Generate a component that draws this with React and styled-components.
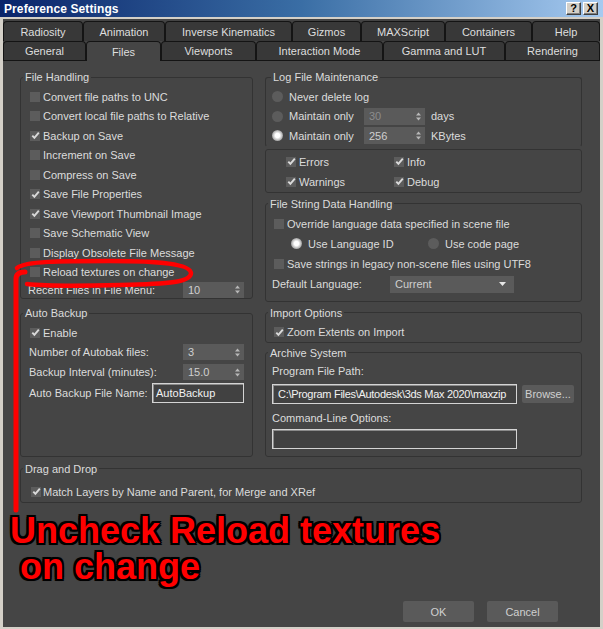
import styled, { createGlobalStyle } from "styled-components";

const GlobalStyle = createGlobalStyle`
  html, body {
    margin: 0;
    padding: 0;
    background: #d4d0c8;
  }
  * {
    box-sizing: border-box;
  }
`;

const Window = styled.div`
  position: relative;
  width: 603px;
  height: 629px;
  background: #d4d0c8;
  display: flex;
  flex-direction: column;
  overflow: hidden;
  font-family: "Liberation Sans", Arial, sans-serif;
  font-size: 11px;
  color: #dcdcdc;
`;

const TitleBar = styled.div`
  height: 17px;
  flex: none;
  display: flex;
  align-items: center;
  justify-content: space-between;
  padding: 0 5px 0 4px;
  background: linear-gradient(to right, #0a246a 0%, #3a6ea5 50%, #a6caf0 100%);
`;

const Title = styled.span`
  color: #fff;
  font-weight: bold;
  font-size: 12px;
  letter-spacing: 0.1px;
`;

const TitleButtons = styled.div`
  display: flex;
  gap: 2px;
`;

const TitleButton = styled.div`
  width: 15px;
  height: 13px;
  background: #d4d0c8;
  border: 1px solid;
  border-color: #ffffff #404040 #404040 #ffffff;
  box-shadow: inset -1px -1px 0 #808080;
  display: flex;
  align-items: center;
  justify-content: center;
  font-weight: bold;
  font-size: 11px;
  color: #000;
  line-height: 1;
`;

const Client = styled.div`
  flex: 1;
  margin: 2px 3px 2px;
  padding-top: 2px;
  background: #444444;
  display: flex;
  flex-direction: column;
  min-height: 0;
`;

const TabRow = styled.div`
  display: flex;
  height: ${(p) => p.$h}px;
  flex: none;
`;

const Tab = styled.div`
  position: relative;
  width: ${(p) => p.$w}px;
  height: ${(p) => (p.$active ? p.$h + 1 : p.$h)}px;
  margin-bottom: ${(p) => (p.$active ? -1 : 0)}px;
  z-index: ${(p) => (p.$active ? 1 : 0)};
  background: ${(p) => (p.$active ? "#454545" : "#383838")};
  border: 1px solid #141414;
  border-bottom: none;
  border-radius: 4px 4px 0 0;
  display: flex;
  align-items: center;
  justify-content: center;
  color: #dedede;
  font-size: 11px;
  white-space: nowrap;
`;

const Panel = styled.div`
  flex: 1;
  display: flex;
  flex-direction: column;
  border-top: 1px solid #141414;
  padding: 9px 18px 0 17px;
  background: #454545;
`;

const Columns = styled.div`
  display: grid;
  grid-template-columns: 233px 317px;
  column-gap: 12px;
`;

const Column = styled.div`
  display: flex;
  flex-direction: column;
`;

const Group = styled.fieldset`
  margin: ${(p) => p.$mt || 0}px 0 0;
  padding: 0;
  border: 1px solid #333333;
  border-bottom-color: ${(p) => (p.$open ? "transparent" : "#333333")};
  border-radius: 3px;
  min-width: 0;
  flex: ${(p) => (p.$grow ? 1 : "none")};
  display: flex;
  flex-direction: column;
`;

const Legend = styled.legend`
  margin-left: ${(p) => p.$lm ?? 2}px;
  padding: 0 2px;
  line-height: 14px;
  font-size: 11px;
  color: #dcdcdc;
`;

const GroupBody = styled.div`
  padding: ${(p) => p.$pad};
  display: flex;
  flex-direction: column;
`;

const PlainBox = styled.div`
  margin-top: ${(p) => p.$mt || 0}px;
  border: 1px solid #333333;
  border-radius: 3px;
  padding: 2px 0 0 20px;
  display: grid;
  grid-template-columns: 108px 1fr;
  grid-auto-rows: 20px;
`;

const Row = styled.div`
  display: flex;
  align-items: center;
  height: ${(p) => p.$h || 19.5}px;
  margin-top: ${(p) => p.$mt || 0}px;
  margin-left: ${(p) => p.$ml || 0}px;
  padding-left: ${(p) => p.$pl || 0}px;
  gap: ${(p) => (p.$gap ?? 3)}px;
  white-space: nowrap;
`;

const SpreadRow = styled(Row)`
  justify-content: space-between;
`;

const Label = styled.span`
  width: ${(p) => (p.$w ? `${p.$w}px` : "auto")};
  flex: none;
  color: #dcdcdc;
`;

const Box = styled.span`
  width: 10px;
  height: 10px;
  flex: none;
  background: #5c5c5c;
  display: flex;
  align-items: center;
  justify-content: center;
`;

const RadioDot = styled.span`
  width: 11px;
  height: 11px;
  flex: none;
  border-radius: 50%;
  background: ${(p) =>
    p.$on
      ? "radial-gradient(circle, #ffffff 0 28%, #d4d4d4 48%, #8a8a8a 80%, #666666 100%)"
      : "#5c5c5c"};
`;

const RadioItem = styled.span`
  display: flex;
  align-items: center;
  gap: 6px;
  width: ${(p) => (p.$w ? `${p.$w}px` : "auto")};
  flex: none;
`;

const SpinBox = styled.span`
  width: 61px;
  height: ${(p) => p.$h || 16}px;
  flex: none;
  background: #5a5a5a;
  display: flex;
  align-items: center;
  justify-content: space-between;
  padding: 0 4px 0 5px;
  color: ${(p) => (p.$dim ? "#8c8c8c" : "#cfcfcf")};
`;

const Dropdown = styled.span`
  width: 124px;
  height: 17px;
  flex: none;
  background: #5a5a5a;
  display: flex;
  align-items: center;
  justify-content: space-between;
  padding: 0 8px 0 5px;
  color: #cfcfcf;
`;

const TextBox = styled.span`
  width: ${(p) => p.$w}px;
  height: 20px;
  flex: none;
  margin-top: ${(p) => p.$mt || 0}px;
  background: #414141;
  border: 1px solid #d4d4d4;
  box-shadow: inset 1px 1px 0 #8a8a8a;
  display: flex;
  align-items: center;
  padding-left: ${(p) => p.$pl || 3}px;
  color: #f2f2f2;
  letter-spacing: ${(p) => p.$ls || 0}px;
  white-space: nowrap;
  overflow: hidden;
`;

const PathRow = styled.div`
  display: flex;
  align-items: center;
  gap: 5px;
  margin-top: 4px;
`;

const FlatButton = styled.span`
  width: ${(p) => p.$w}px;
  height: ${(p) => p.$h}px;
  flex: none;
  background: #5a5a5a;
  border-radius: 2px;
  display: flex;
  align-items: center;
  justify-content: center;
  color: #d0d0d0;
  font-size: 11px;
`;

const Footer = styled.div`
  margin-top: auto;
  display: flex;
  justify-content: flex-end;
  gap: 13px;
  padding: 0 24px 5px 0;
`;

const Overlay = styled.div`
  position: absolute;
  inset: 0;
  pointer-events: none;
  z-index: 5;
`;

const Note = styled.div`
  position: absolute;
  left: 10px;
  top: 513px;
  font-family: "Liberation Sans", Arial, sans-serif;
  font-weight: bold;
  font-size: 36px;
  line-height: 36px;
  color: #ff0000;
  white-space: pre;
  text-shadow: 2px 0 0 #000, -2px 0 0 #000, 0 2px 0 #000, 0 -2px 0 #000,
    2px 2px 0 #000, -2px -2px 0 #000, 2px -2px 0 #000, -2px 2px 0 #000,
    0 0 3px #000;
`;

function Check({ checked, children }) {
  return (
    <>
      <Box>
        {checked && (
          <svg width="9" height="9" viewBox="0 0 9 9">
            <path
              d="M1.3 4.6 L3.4 6.9 L7.8 1.6"
              fill="none"
              stroke="#dadada"
              strokeWidth="1.9"
            />
          </svg>
        )}
      </Box>
      {children && <Label>{children}</Label>}
    </>
  );
}

function Spinner({ value, dim, h }) {
  return (
    <SpinBox $dim={dim} $h={h}>
      <span>{value}</span>
      <svg width="5" height="9" viewBox="0 0 5 9">
        <polygon points="0,3.6 2.5,0.6 5,3.6" fill="#b8b8b8" />
        <polygon points="0,5.4 2.5,8.4 5,5.4" fill="#b8b8b8" />
      </svg>
    </SpinBox>
  );
}

const row1 = [
  ["Radiosity", 80],
  ["Animation", 82],
  ["Inverse Kinematics", 127],
  ["Gizmos", 69],
  ["MAXScript", 84],
  ["Containers", 87],
  ["Help", 68],
];

const row2 = [
  ["General", 83],
  ["Files", 75],
  ["Viewports", 95],
  ["Interaction Mode", 127],
  ["Gamma and LUT", 122],
  ["Rendering", 95],
];

const fileHandling = [
  ["Convert file paths to UNC", false],
  ["Convert local file paths to Relative", false],
  ["Backup on Save", true],
  ["Increment on Save", false],
  ["Compress on Save", false],
  ["Save File Properties", true],
  ["Save Viewport Thumbnail Image", true],
  ["Save Schematic View", false],
  ["Display Obsolete File Message", false],
  ["Reload textures on change", false],
];

export default function App() {
  return (
    <>
      <GlobalStyle />
      <Window>
        <TitleBar>
          <Title>Preference Settings</Title>
          <TitleButtons>
            <TitleButton>?</TitleButton>
            <TitleButton>X</TitleButton>
          </TitleButtons>
        </TitleBar>

        <Client>
          <TabRow $h={20}>
            {row1.map(([name, w]) => (
              <Tab key={name} $w={w} $h={20}>
                {name}
              </Tab>
            ))}
          </TabRow>
          <TabRow $h={19}>
            {row2.map(([name, w]) => (
              <Tab key={name} $w={w} $h={19} $active={name === "Files"}>
                {name}
              </Tab>
            ))}
          </TabRow>

          <Panel>
            <Columns>
              <Column>
                <Group>
                  <Legend>File Handling</Legend>
                  <GroupBody $pad="3px 8px 0 9px">
                    {fileHandling.map(([text, on]) => (
                      <Row key={text}>
                        <Check checked={on}>{text}</Check>
                      </Row>
                    ))}
                    <SpreadRow $h={17} $mt={-1} $ml={-2}>
                      <Label>Recent Files in File Menu:</Label>
                      <Spinner value="10" />
                    </SpreadRow>
                  </GroupBody>
                </Group>

                <Group $mt={7} $grow>
                  <Legend>Auto Backup</Legend>
                  <GroupBody $pad="3px 8px 0 9px">
                    <Row $h={19}>
                      <Check checked>Enable</Check>
                    </Row>
                    <SpreadRow $h={20} $ml={-1}>
                      <Label>Number of Autobak files:</Label>
                      <Spinner value="3" />
                    </SpreadRow>
                    <SpreadRow $h={20} $ml={-1}>
                      <Label>Backup Interval (minutes):</Label>
                      <Spinner value="15.0" />
                    </SpreadRow>
                    <SpreadRow $h={22} $ml={-1}>
                      <Label>Auto Backup File Name:</Label>
                      <TextBox $w={92} $pl={3}>
                        AutoBackup
                      </TextBox>
                    </SpreadRow>
                  </GroupBody>
                </Group>
              </Column>

              <Column>
                <Group $open>
                  <Legend $lm={5}>Log File Maintenance</Legend>
                  <GroupBody $pad="3px 8px 0 6px">
                    <Row>
                      <RadioItem>
                        <RadioDot />
                        <Label>Never delete log</Label>
                      </RadioItem>
                    </Row>
                    <Row $gap={6}>
                      <RadioItem $w={86}>
                        <RadioDot />
                        <Label>Maintain only</Label>
                      </RadioItem>
                      <Spinner value="30" dim h={17} />
                      <Label>days</Label>
                    </Row>
                    <Row $gap={6}>
                      <RadioItem $w={86}>
                        <RadioDot $on />
                        <Label>Maintain only</Label>
                      </RadioItem>
                      <Spinner value="256" h={17} />
                      <Label>KBytes</Label>
                    </Row>
                  </GroupBody>
                </Group>

                <PlainBox $mt={2}>
                  <Row $h={20}>
                    <Check checked>Errors</Check>
                  </Row>
                  <Row $h={20}>
                    <Check checked>Info</Check>
                  </Row>
                  <Row $h={20}>
                    <Check checked>Warnings</Check>
                  </Row>
                  <Row $h={20}>
                    <Check checked>Debug</Check>
                  </Row>
                </PlainBox>

                <Group $mt={4}>
                  <Legend>File String Data Handling</Legend>
                  <GroupBody $pad="3px 8px 6px 8px">
                    <Row $h={20}>
                      <Check>Override language data specified in scene file</Check>
                    </Row>
                    <Row $h={20} $pl={17} $gap={0}>
                      <RadioItem $w={137}>
                        <RadioDot $on />
                        <Label>Use Language ID</Label>
                      </RadioItem>
                      <RadioItem>
                        <RadioDot />
                        <Label>Use code page</Label>
                      </RadioItem>
                    </Row>
                    <Row $h={20}>
                      <Check>Save strings in legacy non-scene files using UTF8</Check>
                    </Row>
                    <Row $h={21} $ml={-2} $gap={0}>
                      <Label $w={118}>Default Language:</Label>
                      <Dropdown>
                        <span>Current</span>
                        <svg width="7" height="4" viewBox="0 0 7 4">
                          <polygon points="0,0 7,0 3.5,4" fill="#e6e6e6" />
                        </svg>
                      </Dropdown>
                    </Row>
                  </GroupBody>
                </Group>

                <Group $mt={4}>
                  <Legend>Import Options</Legend>
                  <GroupBody $pad="3px 8px 0 8px">
                    <Row $h={19}>
                      <Check checked>Zoom Extents on Import</Check>
                    </Row>
                  </GroupBody>
                </Group>

                <Group $mt={3} $grow>
                  <Legend>Archive System</Legend>
                  <GroupBody $pad="2px 6px 7px 6px">
                    <Row $h={18}>
                      <Label>Program File Path:</Label>
                    </Row>
                    <PathRow>
                      <TextBox $w={245} $pl={5} $ls={-0.3}>
                        C:\Program Files\Autodesk\3ds Max 2020\maxzip
                      </TextBox>
                      <FlatButton $w={52} $h={18}>
                        Browse...
                      </FlatButton>
                    </PathRow>
                    <Row $h={18} $mt={5}>
                      <Label>Command-Line Options:</Label>
                    </Row>
                    <TextBox $w={245} $mt={2} />
                  </GroupBody>
                </Group>
              </Column>
            </Columns>

            <Group $mt={5}>
              <Legend>Drag and Drop</Legend>
              <GroupBody $pad="6px 10px 0 10px">
                <Row $h={20} $gap={2}>
                  <Check checked>
                    Match Layers by Name and Parent, for Merge and XRef
                  </Check>
                </Row>
              </GroupBody>
            </Group>

            <Footer>
              <FlatButton $w={71} $h={21}>
                OK
              </FlatButton>
              <FlatButton $w={71} $h={21}>
                Cancel
              </FlatButton>
            </Footer>
          </Panel>
        </Client>

        <Overlay>
          <svg width="603" height="629" viewBox="0 0 603 629">
            <path
              d="M16 510 L16 279 Q16 272 25 272"
              fill="none"
              stroke="#ff0000"
              strokeWidth="5"
              strokeLinecap="round"
            />
            <path
              d="M17 268 C26 261 60 261 110 261 C160 261 190 264 191 273 C191 282 170 284 120 285 C80 286 45 286 27 284"
              fill="none"
              stroke="#ff0000"
              strokeWidth="4.5"
              strokeLinecap="round"
            />
          </svg>
          <Note>{"Uncheck Reload textures\n on change"}</Note>
        </Overlay>
      </Window>
    </>
  );
}
